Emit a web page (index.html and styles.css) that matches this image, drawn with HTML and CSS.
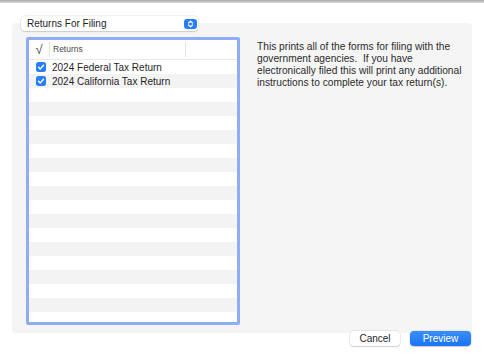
FILE: index.html
```html
<!DOCTYPE html>
<html lang="en">
<head>
    <meta charset="UTF-8">
    <meta name="viewport" content="width=device-width, initial-scale=1.0">
    <title>Print Returns</title>
    <link rel="stylesheet" href="styles.css">
</head>
<body>
    <div class="topbar"></div>

    <div class="sheet">
        <div class="panel">
            <button class="popup">
                <span class="popup-label">Returns For Filing</span>
                <span class="stepper">
                    <svg width="13" height="10" viewBox="0 0 13 10">
                        <path d="M4.5 4 L6.5 2.2 L8.5 4" fill="none" stroke="#fff" stroke-width="1.2" stroke-linecap="round" stroke-linejoin="round"/>
                        <path d="M4.5 6 L6.5 7.8 L8.5 6" fill="none" stroke="#fff" stroke-width="1.2" stroke-linecap="round" stroke-linejoin="round"/>
                    </svg>
                </span>
            </button>

            <div class="content">
                <div class="table">
                    <div class="table-header">
                        <div class="col-check">&radic;</div>
                        <div class="col-name">Returns</div>
                        <div class="col-rest"></div>
                    </div>
                    <div class="table-body">
                        <div class="row">
                            <span class="checkbox">
                                <svg width="10" height="10" viewBox="0 0 10 10">
                                    <path d="M2.6 5.2 L4.3 6.9 L7.5 3.3" fill="none" stroke="#fff" stroke-width="1.4" stroke-linecap="round" stroke-linejoin="round"/>
                                </svg>
                            </span>
                            <span class="row-label">2024 Federal Tax Return</span>
                        </div>
                        <div class="row">
                            <span class="checkbox">
                                <svg width="10" height="10" viewBox="0 0 10 10">
                                    <path d="M2.6 5.2 L4.3 6.9 L7.5 3.3" fill="none" stroke="#fff" stroke-width="1.4" stroke-linecap="round" stroke-linejoin="round"/>
                                </svg>
                            </span>
                            <span class="row-label">2024 California Tax Return</span>
                        </div>
                    </div>
                </div>

                <p class="description">
                    This prints all of the forms for filing with the<br>
                    government agencies.&nbsp; If you have<br>
                    electronically filed this will print any additional<br>
                    instructions to complete your tax return(s).
                </p>
            </div>
        </div>

        <div class="actions">
            <button class="btn">Cancel</button>
            <button class="btn btn-primary">Preview</button>
        </div>
    </div>
</body>
</html>
```

FILE: styles.css
```css
:root {
    --accent: #2a7ef5;
    --focus-ring: #8fadf4;
    --panel-bg: #f5f5f5;
    --stripe: #f3f3f3;
    --text-color: #1f1f1f;
}

body {
    margin: 0;
    background: #fff;
    font-family: "Liberation Sans", Arial, sans-serif;
    color: var(--text-color);
    width: 484px;
    height: 357px;
    overflow: hidden;
}

.topbar {
    height: 3px;
    background: linear-gradient(#a8a8a8, #dcdcdc);
}

.sheet {
    padding: 20px 12px 0 12px;
}

.panel {
    display: flex;
    flex-direction: column;
    height: 310px;
    box-sizing: border-box;
    background: var(--panel-bg);
    border-radius: 4px;
}

.popup {
    align-self: flex-start;
    display: flex;
    align-items: center;
    justify-content: space-between;
    width: 177px;
    height: 15px;
    margin: -7px 0 0 9px;
    padding: 0 1px 0 6px;
    border: none;
    border-radius: 4px;
    background: #fff;
    box-shadow: 0 0 0 0.5px rgba(0, 0, 0, 0.12), 0 1px 1.5px rgba(0, 0, 0, 0.12);
    font-family: inherit;
    font-size: 10px;
    color: #1f1f1f;
}

.stepper {
    display: flex;
    width: 13px;
    height: 10px;
    border-radius: 3px;
    background: var(--accent);
}

.content {
    display: flex;
    margin: 6px 0 8px 14px;
    flex: 1;
}

.table {
    display: flex;
    flex-direction: column;
    width: 214px;
    height: 288px;
    box-sizing: border-box;
    border: 3px solid var(--focus-ring);
    border-radius: 2px;
    background: #fff;
    overflow: hidden;
}

.table-header {
    display: flex;
    align-items: center;
    height: 19px;
    border-bottom: 1px solid #e8e8e8;
    font-size: 8.5px;
    color: #4a4a4a;
}

.col-check {
    width: 20px;
    text-align: center;
    font-size: 13px;
    font-style: italic;
    border-right: 1px solid #e2e2e2;
    line-height: 15px;
}

.col-name {
    width: 132px;
    padding-left: 3px;
    border-right: 1px solid #e2e2e2;
    line-height: 15px;
}

.col-rest {
    flex: 1;
}

.table-body {
    flex: 1;
    background: repeating-linear-gradient(#fff 0 14px, var(--stripe) 14px 28px);
}

.row {
    display: flex;
    align-items: center;
    gap: 6px;
    height: 14px;
    padding-left: 7px;
    font-size: 10px;
    color: #1f1f1f;
}

.checkbox {
    display: flex;
    width: 10px;
    height: 10px;
    border-radius: 2.5px;
    background: var(--accent);
}

.description {
    margin: 4px 0 0 17px;
    font-size: 10.2px;
    line-height: 12px;
    color: #2b2b2b;
    white-space: nowrap;
}

.actions {
    display: flex;
    justify-content: flex-end;
    gap: 10px;
    margin-top: -2px;
    padding-right: 1px;
}

.btn {
    height: 15px;
    padding: 0;
    width: 50px;
    border: none;
    border-radius: 4px;
    background: #fff;
    box-shadow: 0 0 0 0.5px rgba(0, 0, 0, 0.12), 0 1px 1.5px rgba(0, 0, 0, 0.15);
    font-family: inherit;
    font-size: 10px;
    color: #1f1f1f;
}

.btn-primary {
    width: 61px;
    background: linear-gradient(#3a8ef8, #1a74f2);
    color: #fff;
}
```
